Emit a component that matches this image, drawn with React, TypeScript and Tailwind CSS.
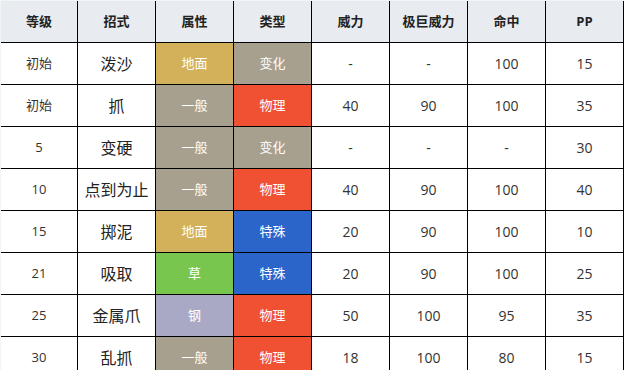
const headers = ["等级", "招式", "属性", "类型", "威力", "极巨威力", "命中", "PP"];

const typeColors: Record<string, string> = {
  地面: "bg-[#d3b05a]",
  一般: "bg-[#a8a08f]",
  草: "bg-[#79c64f]",
  钢: "bg-[#a9a9c5]",
};

const categoryColors: Record<string, string> = {
  变化: "bg-[#a8a08f]",
  物理: "bg-[#ef5132]",
  特殊: "bg-[#2b65c9]",
};

const moves = [
  { level: "初始", name: "泼沙", type: "地面", cat: "变化", power: "-", max: "-", acc: "100", pp: "15" },
  { level: "初始", name: "抓", type: "一般", cat: "物理", power: "40", max: "90", acc: "100", pp: "35" },
  { level: "5", name: "变硬", type: "一般", cat: "变化", power: "-", max: "-", acc: "-", pp: "30" },
  { level: "10", name: "点到为止", type: "一般", cat: "物理", power: "40", max: "90", acc: "100", pp: "40" },
  { level: "15", name: "掷泥", type: "地面", cat: "特殊", power: "20", max: "90", acc: "100", pp: "10" },
  { level: "21", name: "吸取", type: "草", cat: "特殊", power: "20", max: "90", acc: "100", pp: "25" },
  { level: "25", name: "金属爪", type: "钢", cat: "物理", power: "50", max: "100", acc: "95", pp: "35" },
  { level: "30", name: "乱抓", type: "一般", cat: "物理", power: "18", max: "100", acc: "80", pp: "15" },
];

const cell =
  "flex h-[42px] items-center justify-center border-r border-b border-black";

export default function App() {
  return (
    <div
      className="w-[624px] bg-white text-[#333]"
      style={{ fontFamily: '"Open Sans", "Noto Sans CJK SC", sans-serif' }}
    >
      <div className="grid grid-cols-[77px_repeat(7,78px)] border-t border-l border-[#f3f4f7]">
        {headers.map((h) => (
          <div
            key={h}
            className={`${cell} bg-[#e8ebf0] text-[13px] font-bold text-[#222]`}
          >
            {h}
          </div>
        ))}
        {moves.map((m, i) => (
          <div key={i} className="contents">
            <div className={`${cell} text-[13px]`}>{m.level}</div>
            <div className={`${cell} text-[16px] text-[#222]`}>{m.name}</div>
            <div className={`${cell} ${typeColors[m.type]} text-[13px] text-white`}>
              {m.type}
            </div>
            <div className={`${cell} ${categoryColors[m.cat]} text-[13px] text-white`}>
              {m.cat}
            </div>
            <div className={`${cell} text-[14px]`}>{m.power}</div>
            <div className={`${cell} text-[14px]`}>{m.max}</div>
            <div className={`${cell} text-[14px]`}>{m.acc}</div>
            <div className={`${cell} text-[14px]`}>{m.pp}</div>
          </div>
        ))}
      </div>
    </div>
  );
}
